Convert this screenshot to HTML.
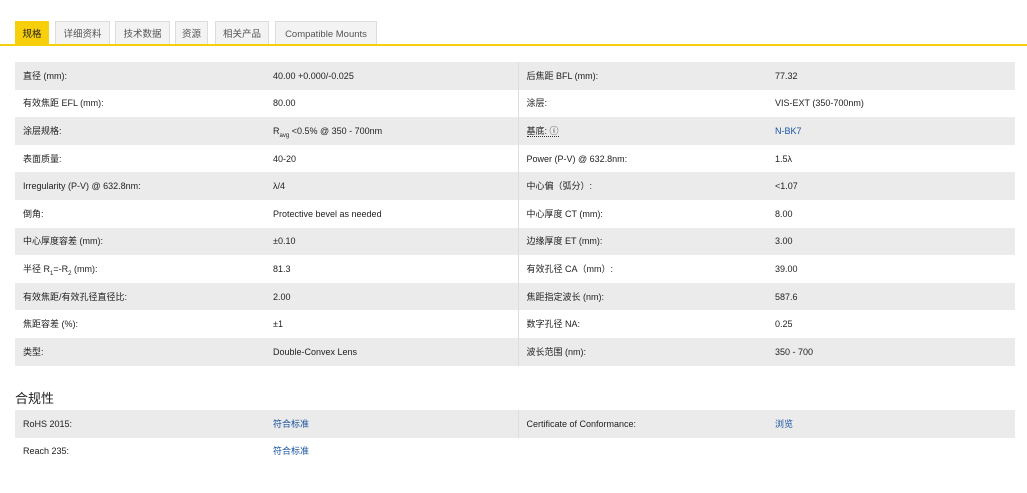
<!DOCTYPE html>
<html><head><meta charset="utf-8"><style>
body{margin:0;background:#fff;font-family:"Liberation Sans","Noto Sans CJK SC",sans-serif;font-size:9px;color:#222;width:1027px;height:493px;overflow:hidden;position:relative}
.tabs{position:absolute;top:20px;left:0;width:1027px;height:24px;border-bottom:2px solid #f5cf0a}
.tab{position:absolute;top:1px;height:23px;line-height:25px;text-align:center;background:#f3f3f3;border:1px solid #dcdcdc;border-bottom:none;color:#555;font-size:9.5px;box-sizing:border-box}
.tab.a{background:#f7cf0a;color:#222;border-color:#f7cf0a}
table{position:absolute;left:15px;border-collapse:collapse;width:1000px}
td{height:27.6px;padding:0 0 0 8px;vertical-align:middle;white-space:nowrap;line-height:12px;box-sizing:border-box}
td span.t{display:inline-block;vertical-align:middle}
tr:nth-child(odd) td{background:#ebebeb}
td.c3{border-left:1px solid #ddd}
a{color:#1a55a0;text-decoration:none}
h2{position:absolute;left:15px;top:388px;margin:0;font-size:13px;font-weight:normal;color:#222}
sub{font-size:6px;line-height:0}
</style></head><body>
<div class="tabs">
<div class="tab a" style="left:15px;width:34px">规格</div>
<div class="tab" style="left:55px;width:55px">详细资料</div>
<div class="tab" style="left:115px;width:55px">技术数据</div>
<div class="tab" style="left:175px;width:33px">资源</div>
<div class="tab" style="left:215px;width:54px">相关产品</div>
<div class="tab" style="left:275px;width:102px">Compatible Mounts</div>
</div>
<table style="top:62px">
<colgroup><col style="width:250px"><col style="width:253px"><col style="width:249px"><col></colgroup>
<tr><td>直径 (mm):</td><td>40.00 +0.000/-0.025</td><td class="c3">后焦距 BFL (mm):</td><td>77.32</td></tr>
<tr><td>有效焦距 EFL (mm):</td><td>80.00</td><td class="c3">涂层:</td><td>VIS-EXT (350-700nm)</td></tr>
<tr><td>涂层规格:</td><td>R<sub>avg</sub> &lt;0.5% @ 350 - 700nm</td><td class="c3"><span style="border-bottom:1px dotted #333">基底: ⓘ</span></td><td><a>N-BK7</a></td></tr>
<tr><td>表面质量:</td><td>40-20</td><td class="c3">Power (P-V) @ 632.8nm:</td><td>1.5λ</td></tr>
<tr><td>Irregularity (P-V) @ 632.8nm:</td><td>λ/4</td><td class="c3">中心偏（弧分）:</td><td>&lt;1.07</td></tr>
<tr><td>倒角:</td><td>Protective bevel as needed</td><td class="c3">中心厚度 CT (mm):</td><td>8.00</td></tr>
<tr><td>中心厚度容差 (mm):</td><td>±0.10</td><td class="c3">边缘厚度 ET (mm):</td><td>3.00</td></tr>
<tr><td>半径 R<sub>1</sub>=-R<sub>2</sub> (mm):</td><td>81.3</td><td class="c3">有效孔径 CA（mm）:</td><td>39.00</td></tr>
<tr><td>有效焦距/有效孔径直径比:</td><td>2.00</td><td class="c3">焦距指定波长 (nm):</td><td>587.6</td></tr>
<tr><td>焦距容差 (%):</td><td>±1</td><td class="c3">数字孔径 NA:</td><td>0.25</td></tr>
<tr><td>类型:</td><td>Double-Convex Lens</td><td class="c3">波长范围 (nm):</td><td>350 - 700</td></tr>
</table>
<h2>合规性</h2>
<table style="top:410px">
<colgroup><col style="width:250px"><col style="width:253px"><col style="width:249px"><col></colgroup>
<tr><td>RoHS 2015:</td><td><a>符合标准</a></td><td class="c3">Certificate of Conformance:</td><td><a>浏览</a></td></tr>
<tr><td>Reach 235:</td><td><a>符合标准</a></td><td></td><td></td></tr>
</table>
</body></html>
